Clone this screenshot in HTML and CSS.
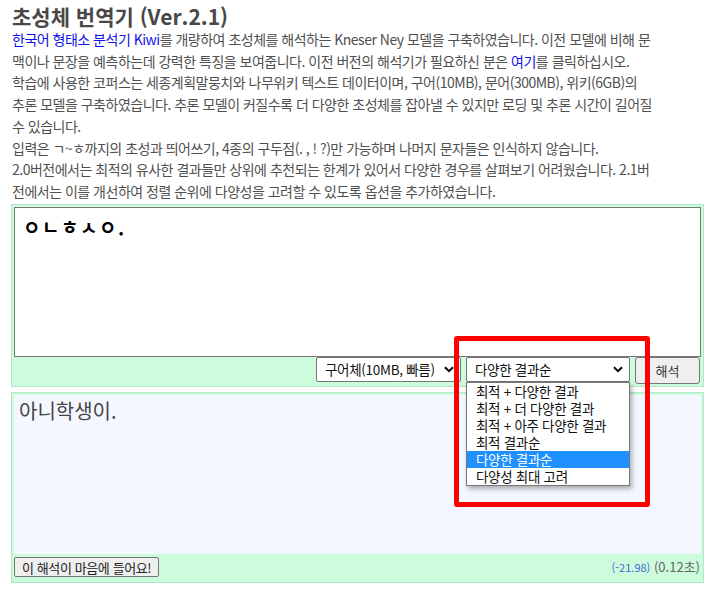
FILE: index.html
```html
<!DOCTYPE html>
<html lang="ko">
<head>
  <meta charset="UTF-8">
  <meta name="viewport" content="width=device-width, initial-scale=1.0">
  <title>초성체 번역기</title>
  <link rel="stylesheet" href="styles.css">
</head>
<body>
  <div class="page">
    <h1 class="title">초성체 번역기 (Ver.2.1)</h1>
    <div class="intro">
      <a href="#">한국어 형태소 분석기 Kiwi</a>를 개량하여 초성체를 해석하는 Kneser Ney 모델을 구축하였습니다. 이전 모델에 비해 문<br>
      맥이나 문장을 예측하는데 강력한 특징을 보여줍니다. 이전 버전의 해석기가 필요하신 분은 <a href="#">여기</a>를 클릭하십시오.<br>
      학습에 사용한 코퍼스는 세종계획말뭉치와 나무위키 텍스트 데이터이며, 구어(10MB), 문어(300MB), 위키(6GB)의<br>
      추론 모델을 구축하였습니다. 추론 모델이 커질수록 더 다양한 초성체를 잡아낼 수 있지만 로딩 및 추론 시간이 길어질<br>
      수 있습니다.<br>
      입력은 ㄱ~ㅎ까지의 초성과 띄어쓰기, 4종의 구두점(. , ! ?)만 가능하며 나머지 문자들은 인식하지 않습니다.<br>
      2.0버전에서는 최적의 유사한 결과들만 상위에 추천되는 한계가 있어서 다양한 경우를 살펴보기 어려웠습니다. 2.1버<br>
      전에서는 이를 개선하여 정렬 순위에 다양성을 고려할 수 있도록 옵션을 추가하였습니다.
    </div>

    <div class="panel">
      <textarea class="input" spellcheck="false">ㅇㄴㅎㅅㅇ.</textarea>
      <div class="controls">
        <div class="select model">
          <span>구어체(10MB, 빠름)</span>
          <svg width="10" height="7" viewBox="0 0 10 7"><path d="M1 1.2 L5 5.2 L9 1.2" fill="none" stroke="#000" stroke-width="2"/></svg>
        </div>
        <div class="select sort">
          <span>다양한 결과순</span>
          <svg width="10" height="7" viewBox="0 0 10 7"><path d="M1 1.2 L5 5.2 L9 1.2" fill="none" stroke="#000" stroke-width="2"/></svg>
          <ul class="options">
            <li>최적 + 다양한 결과</li>
            <li>최적 + 더 다양한 결과</li>
            <li>최적 + 아주 다양한 결과</li>
            <li>최적 결과순</li>
            <li class="selected">다양한 결과순</li>
            <li>다양성 최대 고려</li>
          </ul>
        </div>
        <button class="run">해석</button>
      </div>
    </div>

    <div class="panel output">
      <div class="result">아니학생이.</div>
      <div class="footer">
        <button class="like">이 해석이 마음에 들어요!</button>
        <span class="meta"><span class="score">(-21.98)</span> <span class="time">(0.12초)</span></span>
      </div>
    </div>

    <div class="mark"></div>
  </div>
</body>
</html>
```

FILE: styles.css
```css
* {
  box-sizing: border-box;
  margin: 0;
  padding: 0;
  font-family: 'Noto Sans CJK KR', 'Noto Sans', sans-serif;
}

body {
  background: #ffffff;
  color: #555;
}

.page {
  position: relative;
  width: 723px;
  padding-left: 11px;
}

.title {
  padding-top: 3px;
  padding-left: 1px;
  font-size: 21px;
  line-height: 26px;
  font-weight: 700;
  color: #484848;
}

.intro {
  padding-left: 1px;
  font-size: 14px;
  line-height: 21.7px;
  letter-spacing: -0.5px;
  white-space: nowrap;
  color: #505050;
}

.intro a {
  color: #1010e8;
  text-decoration: none;
}

.panel {
  width: 693px;
  margin-top: 1px;
  padding: 2px;
  background: #ccfcdc;
  border: 1px solid #ade9c6;
}

.input {
  display: block;
  width: 687px;
  height: 150px;
  padding: 8px 8px;
  border: 1px solid #767676;
  resize: none;
  outline: none;
  font-size: 19px;
  font-weight: 700;
  letter-spacing: 1.5px;
  line-height: 22px;
  color: #000;
  background: #fff;
}

.controls {
  display: flex;
  justify-content: flex-end;
  align-items: flex-start;
  gap: 5px;
  padding-right: 1px;
  height: 27px;
}

.select {
  position: relative;
  display: flex;
  align-items: center;
  justify-content: space-between;
  height: 25px;
  padding: 0 6px 0 8px;
  border: 1px solid #767676;
  border-radius: 2px;
  background: #fff;
  font-size: 13.5px;
  letter-spacing: -0.3px;
  color: #111;
}

.model {
  width: 145px;
}

.sort {
  width: 164px;
}

.options {
  position: absolute;
  top: 24px;
  left: -1px;
  width: 164px;
  list-style: none;
  background: #fff;
  border: 1px solid #767676;
  box-shadow: 2px 3px 5px rgba(0, 0, 0, 0.3);
  z-index: 2;
}

.options li {
  height: 17px;
  line-height: 17px;
  padding-left: 9px;
  font-size: 13.5px;
  letter-spacing: -0.3px;
  color: #111;
}

.options li.selected {
  background: #1e90ff;
  color: #fff;
}

button {
  border: 1px solid #767676;
  border-radius: 3px;
  background: #efefef;
  color: #333;
  font-size: 13px;
  cursor: pointer;
}

.run {
  width: 65px;
  height: 27px;
}

.output {
  margin-top: 5px;
}

.result {
  height: 159px;
  padding: 2px 5px;
  background: #f4f7ff;
  font-size: 20px;
  line-height: 28px;
  color: #444;
}

.footer {
  display: flex;
  justify-content: space-between;
  align-items: center;
  height: 26px;
}

.like {
  height: 20px;
  padding: 0 7px;
  border-radius: 2px;
  font-size: 13px;
  letter-spacing: -0.4px;
  color: #222;
}

.meta {
  font-size: 13px;
  color: #666;
  padding-right: 1px;
}

.score {
  font-size: 11px;
  color: #4466cc;
}

.mark {
  position: absolute;
  left: 454px;
  top: 336px;
  width: 196px;
  height: 171px;
  border: 5px solid #ff0000;
  border-radius: 3px;
  z-index: 3;
}
```
